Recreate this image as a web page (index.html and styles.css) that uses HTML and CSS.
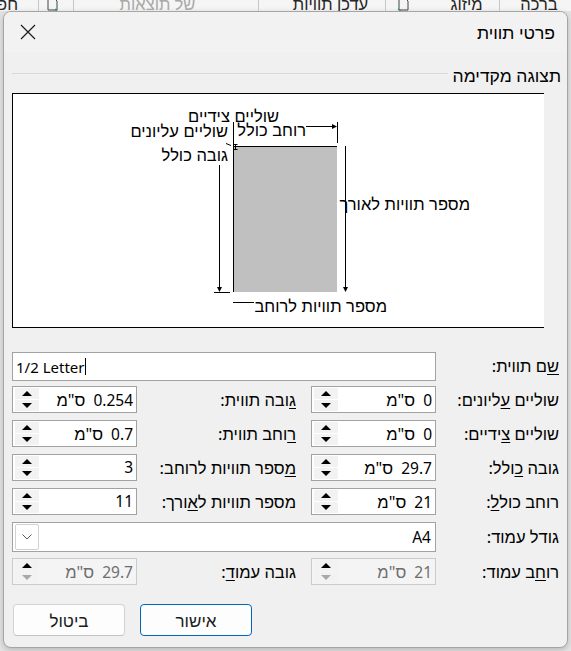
FILE: index.html
```html
<!DOCTYPE html>
<html lang="he">
<head>
    <meta charset="UTF-8">
    <meta name="viewport" content="width=device-width, initial-scale=1.0">
    <title>פרטי תווית</title>
    <link rel="stylesheet" href="styles.css">
</head>
<body>
    <div class="ribbon">
        <div class="ribbon-row">
            <span class="rb-item w-home">ברכה</span>
            <span class="rb-sep sep-a"></span>
            <span class="rb-item w-merge">מיזוג &#711;</span>
            <span class="rb-icon icon-a"><svg width="14" height="14" viewBox="0 0 14 14"><path d="M3 1h6l3 3v9H3z" fill="none" stroke="#444"/><path d="M2 12l3 2" stroke="#2e9e4f" stroke-width="1.5"/></svg></span>
            <span class="rb-sep sep-b"></span>
            <span class="rb-item w-update">עדכן תוויות</span>
            <span class="rb-sep sep-c"></span>
            <span class="rb-item rb-dim w-results">של תוצאות</span>
            <span class="rb-sep sep-d"></span>
            <span class="rb-icon icon-b"><svg width="14" height="14" viewBox="0 0 14 14"><path d="M3 1h6l3 3v9H3z" fill="none" stroke="#444"/><path d="M10 12l2 2" stroke="#2e9e4f" stroke-width="1.5"/></svg></span>
            <span class="rb-sep sep-e"></span>
            <span class="rb-item w-find">חפש</span>
        </div>
    </div>

    <div class="dialog" dir="rtl">
        <div class="titlebar">
            <span class="title">פרטי תווית</span>
            <button class="close" aria-label="סגור">
                <svg width="16" height="16" viewBox="0 0 16 16"><path d="M1 1L15 15M15 1L1 15" stroke="#1b1b1b" stroke-width="1.2" fill="none"/></svg>
            </button>
        </div>

        <div class="content">
            <div class="section-head">
                <span>תצוגה מקדימה</span>
                <span class="rule"></span>
            </div>

            <div class="preview">
                <svg class="pv" width="531" height="233" viewBox="13 94 531 233">
                    <rect x="233" y="146" width="104" height="146" fill="#c0c0c0"/>
                    <path d="M233 146.5H337M233.5 146V292" stroke="#000" fill="none"/>

                    <text x="279" y="122" text-anchor="end">שוליים צידיים</text>
                    <text x="306" y="136" text-anchor="end">רוחב כולל</text>
                    <path d="M306 126.5H333M337.5 122V143M233.5 122V146" stroke="#000" fill="none"/>
                    <path d="M337 126.5L332 124V129z" fill="#000"/>

                    <text x="228" y="137" text-anchor="end">שוליים עליונים</text>
                    <path d="M226 143.5L231 145.5M235.5 144V150M233.5 144.5H237.5M233.5 149.5H237.5" stroke="#000" fill="none"/>

                    <text x="228" y="161" text-anchor="end">גובה כולל</text>
                    <path d="M219.5 165V288M214 292.5H230" stroke="#000" fill="none"/>
                    <path d="M219.5 292L217 287H222z" fill="#000"/>

                    <path d="M345.5 146V288" stroke="#000" fill="none"/>
                    <path d="M345.5 292L343 287H348z" fill="#000"/>
                    <text x="470" y="210" text-anchor="end">מספר תוויות לאורך</text>

                    <path d="M233 302.5H254" stroke="#000" fill="none"/>
                    <text x="387" y="312" text-anchor="end">מספר תוויות לרוחב</text>
                </svg>
            </div>

            <div class="form">
                <label class="lbl"><span><u>ש</u>ם תווית:</span></label>
                <div class="name-input wide"><span class="name-text">1/2 Letter</span><span class="caret"></span></div>

                <label class="lbl"><span>שוליים <u>ע</u>ליונים:</span></label>
                <div class="spin"><span class="val">0&nbsp;&nbsp;<span class="unit">ס"מ</span></span><span class="arrows"><i class="up"></i><i class="down"></i></span></div>
                <label class="lbl lbl2"><span><u>ג</u>ובה תווית:</span></label>
                <div class="spin"><span class="val">0.254&nbsp;&nbsp;<span class="unit">ס"מ</span></span><span class="arrows"><i class="up"></i><i class="down"></i></span></div>

                <label class="lbl"><span>שוליים <u>צ</u>ידיים:</span></label>
                <div class="spin"><span class="val">0&nbsp;&nbsp;<span class="unit">ס"מ</span></span><span class="arrows"><i class="up"></i><i class="down"></i></span></div>
                <label class="lbl lbl2"><span><u>ר</u>וחב תווית:</span></label>
                <div class="spin"><span class="val">0.7&nbsp;&nbsp;<span class="unit">ס"מ</span></span><span class="arrows"><i class="up"></i><i class="down"></i></span></div>

                <label class="lbl"><span>גובה <u>כ</u>ולל:</span></label>
                <div class="spin"><span class="val">29.7&nbsp;&nbsp;<span class="unit">ס"מ</span></span><span class="arrows"><i class="up"></i><i class="down"></i></span></div>
                <label class="lbl lbl2"><span><u>מ</u>ספר תוויות לרוחב:</span></label>
                <div class="spin"><span class="val">3</span><span class="arrows"><i class="up"></i><i class="down"></i></span></div>

                <label class="lbl"><span>רוחב כול<u>ל</u>:</span></label>
                <div class="spin"><span class="val">21&nbsp;&nbsp;<span class="unit">ס"מ</span></span><span class="arrows"><i class="up"></i><i class="down"></i></span></div>
                <label class="lbl lbl2"><span>מספר תוויות ל<u>א</u>ורך:</span></label>
                <div class="spin"><span class="val">11</span><span class="arrows"><i class="up"></i><i class="down"></i></span></div>

                <label class="lbl lbl-combo"><span>גודל עמוד:</span></label>
                <div class="combo wide">
                    <span class="val">A4</span>
                    <span class="drop"><svg width="10" height="6" viewBox="0 0 10 6"><path d="M0.5 0.5L5 5L9.5 0.5" stroke="#5a5a5a" fill="none"/></svg></span>
                </div>

                <label class="lbl"><span>רו<u>ח</u>ב עמוד:</span></label>
                <div class="spin disabled"><span class="val">21&nbsp;&nbsp;<span class="unit">ס"מ</span></span><span class="arrows"><i class="up"></i><i class="down"></i></span></div>
                <label class="lbl lbl2"><span>גובה עמו<u>ד</u>:</span></label>
                <div class="spin disabled"><span class="val">29.7&nbsp;&nbsp;<span class="unit">ס"מ</span></span><span class="arrows"><i class="up"></i><i class="down"></i></span></div>
            </div>

            <div class="buttons">
                <button class="btn primary">אישור</button>
                <button class="btn">ביטול</button>
            </div>
        </div>
    </div>
</body>
</html>
```

FILE: styles.css
```css
:root {
    --dlg-bg: #f0f0f0;
    --text: #000000;
    --field-border: #a2a2a2;
    --field-border-off: #cbcbcb;
    --accent: #0067c0;
}
body {
    margin: 0;
    width: 571px;
    height: 651px;
    overflow: hidden;
    background: #e4e4e4;
    font-family: "Noto Sans", "Liberation Sans", sans-serif;
    font-size: 15px;
    color: var(--text);
}

/* background app ribbon, mostly hidden behind the dialog */
.ribbon {
    height: 11px;
    overflow: hidden;
    background: #f5f5f5;
    direction: rtl;
}
.ribbon-row {
    display: flex;
    align-items: center;
    margin-top: -6px;
    height: 20px;
    line-height: 20px;
    font-size: 16.5px;
    white-space: nowrap;
    color: #262626;
}
.ribbon-row > span {
    flex-shrink: 0;
}
.rb-item {
    display: flex;
    justify-content: center;
}
.rb-sep {
    width: 1px;
    height: 20px;
    background: #c6c6c6;
}
.rb-dim { color: #a8a8a8; }
.rb-icon { display: flex; }
.w-home { width: 42px; margin-right: 11px; }
.sep-a { margin-right: 18px; }
.w-merge { width: 48px; margin-right: 14px; }
.icon-a { margin-right: 27px; }
.sep-b { margin-right: 10px; }
.w-update { width: 81px; margin-right: 14px; }
.sep-c { margin-right: 31px; }
.w-results { width: 77px; margin-right: 62px; }
.sep-d { margin-right: 45px; }
.icon-b { margin-right: 14px; }
.sep-e { margin-right: 6px; }
.w-find { width: 40px; margin-right: 20px; justify-content: flex-start; }

.dialog {
    margin-left: 3px;
    width: 565px;
    height: 637px;
    box-sizing: border-box;
    border: 1px solid #a5a5a5;
    border-radius: 8px;
    background: var(--dlg-bg);
    box-shadow: 0 2px 6px rgba(0, 0, 0, 0.2);
    overflow: hidden;
}
.titlebar {
    height: 40px;
    display: flex;
    align-items: center;
    justify-content: space-between;
    padding: 0 12px 0 16px;
    background: #f2f2f2;
}
.title {
    font-size: 17.5px;
    line-height: 20px;
}
.close {
    width: 16px;
    height: 16px;
    padding: 0;
    border: none;
    background: none;
    display: flex;
}

.content {
    padding: 0 8px;
}
.section-head {
    margin-top: 13px;
    height: 20px;
    display: flex;
    align-items: center;
    margin-right: -2px;
    font-size: 17.5px;
    line-height: 20px;
}
.rule {
    flex: 1;
    height: 1px;
    background: #d9d9d9;
    margin-right: 5px;
    margin-bottom: 4px;
}

.preview {
    margin-top: 8px;
    margin-right: 15px;
    width: 532px;
    height: 235px;
    box-sizing: border-box;
    background: #ffffff;
    border: 1px solid #000;
    border-right: none;
}
.pv {
    display: block;
    direction: ltr;
}
.pv text {
    font-family: "Liberation Sans", sans-serif;
    font-size: 16.5px;
    fill: #000;
}

.form {
    margin-top: 24px;
    display: grid;
    grid-template-columns: 123px 125px 174px 125px;
    grid-template-rows: 34px 34px 34px 34px 34px 36px 28px;
    align-items: start;
}
.lbl {
    height: 27px;
    display: flex;
    align-items: center;
    font-size: 16.5px;
    line-height: 20px;
    white-space: nowrap;
}
.lbl u {
    text-decoration-thickness: 1px;
    text-underline-offset: 2px;
}
.lbl2 {
    padding-right: 15px;
}
.lbl-combo {
    height: 30px;
}
.wide {
    grid-column: 2 / 5;
}

.name-input {
    height: 29px;
    box-sizing: border-box;
    border: 1px solid var(--field-border);
    background: #fff;
    direction: ltr;
    display: flex;
    align-items: center;
    padding-left: 3px;
}
.name-text {
    line-height: 20px;
}
.caret {
    width: 1px;
    height: 17px;
    background: #000;
    margin-left: 1px;
}

.spin {
    height: 27px;
    box-sizing: border-box;
    border: 1px solid var(--field-border);
    background: #fff;
    padding: 1px;
    display: flex;
}
.spin .val {
    flex: 1;
    padding-right: 2px;
    font-size: 15.5px;
    line-height: 23px;
    white-space: nowrap;
}
.unit {
    font-size: 16.5px;
}
.arrows {
    width: 24px;
    margin-left: 1px;
    display: flex;
    flex-direction: column;
    gap: 1px;
}
.arrows i {
    flex: 1;
    background: #f2f2f2;
    display: flex;
    align-items: center;
    justify-content: center;
}
.arrows i::before {
    content: "";
    border-left: 5px solid transparent;
    border-right: 5px solid transparent;
}
.up::before {
    border-bottom: 5px solid #000;
}
.down::before {
    border-top: 5px solid #000;
}
.spin.disabled {
    border-color: var(--field-border-off);
    background: #f4f4f4;
    color: #6e6e6e;
}
.spin.disabled .down::before {
    border-top-color: #a8a8a8;
}

.combo {
    height: 30px;
    box-sizing: border-box;
    border: 1px solid var(--field-border);
    background: #fff;
    display: flex;
    align-items: center;
    justify-content: space-between;
    padding: 1px 4px 1px 2px;
}
.combo .val {
    font-size: 15.5px;
    line-height: 20px;
}
.drop {
    width: 24px;
    height: 26px;
    box-sizing: border-box;
    border: 1px solid #d2d2d2;
    border-radius: 2px;
    display: flex;
    align-items: center;
    justify-content: center;
}

.buttons {
    margin-top: 18px;
    display: flex;
    justify-content: flex-end;
    gap: 15px;
    padding-left: 1px;
}
.btn {
    width: 112px;
    height: 32px;
    box-sizing: border-box;
    border: 1px solid #d3d3d3;
    border-bottom-color: #c2c2c2;
    border-radius: 4px;
    background: #fdfdfd;
    font: inherit;
    font-size: 17px;
    color: #1b1b1b;
    padding: 0;
}
.btn.primary {
    border-color: var(--accent);
}
```
